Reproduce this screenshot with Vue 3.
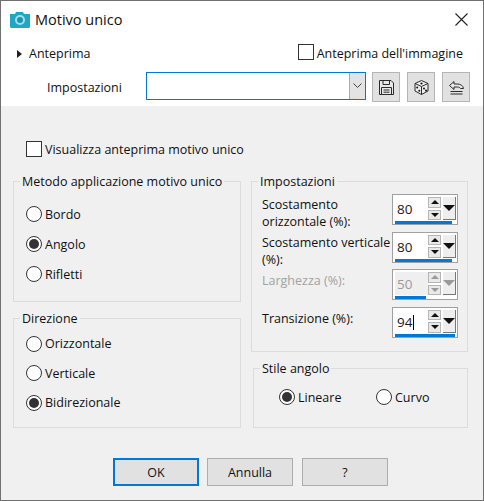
<script setup>
const methods = [
  { label: 'Bordo', on: false },
  { label: 'Angolo', on: true },
  { label: 'Rifletti', on: false }
]
const directions = [
  { label: 'Orizzontale', on: false },
  { label: 'Verticale', on: false },
  { label: 'Bidirezionale', on: true }
]
const offsets = [
  { label: 'Scostamento orizzontale (%):', value: '80', bar: 57 },
  { label: 'Scostamento verticale (%):', value: '80', bar: 57 },
  { label: 'Larghezza (%):', value: '50', bar: 31, off: true },
  { label: 'Transizione (%):', value: '94', bar: 60, caret: true }
]
</script>

<template>
  <div class="win">
    <header class="head">
      <div class="title-row">
        <svg class="cam" width="20" height="17" viewBox="0 0 20 17">
          <path d="M0 3h5l1-2h7l1 2h6v13l-1 1H1l-1-1z" fill="#1fa7c4" />
          <circle cx="10" cy="9" r="5" fill="#a5dfec" />
          <circle cx="10" cy="9" r="3" fill="#1c93b2" />
        </svg>
        <span class="title">Motivo unico</span>
        <svg class="close" width="13" height="13" viewBox="0 0 13 13">
          <path d="M.5 .5l12 12M12.500 .5l-12 12" stroke="#222" stroke-width="1.1" fill="none" />
        </svg>
      </div>
      <div class="preview-row">
        <span class="tri"></span>
        <span class="text">Anteprima</span>
        <span class="box image-box"></span>
        <span class="text">Anteprima dell'immagine</span>
      </div>
      <div class="preset-row">
        <span class="text preset-label">Impostazioni</span>
        <div class="combo">
          <span class="combo-arrow">
            <svg width="9" height="6" viewBox="0 0 9 6">
              <path d="M.5 .5l4 4 4-4" stroke="#444" fill="none" />
            </svg>
          </span>
        </div>
        <button class="tool">
          <svg width="15" height="15" viewBox="0 0 15 15" fill="none" stroke="#2b2b2b">
            <path d="M.5 .5h11.500l2.500 2.500v11.500H.5z" fill="#e8e8e8" />
            <path d="M4 .5v4h6.500v-4M2.500 14.500v-7h10v7M4.500 10h6M4.500 12.200h6" />
          </svg>
        </button>
        <button class="tool">
          <svg width="15" height="15" viewBox="0 0 15 15" stroke="#2b2b2b">
            <path d="M7.500 .5L14 3.500v7.500l-6.500 3.500L1 11V3.500z" fill="#eee" stroke-linejoin="round" />
            <path d="M1 3.500l6.500 3 6.500-3M7.500 6.500v8" fill="none" />
            <g fill="#111" stroke="none">
              <circle cx="7.500" cy="3.500" r="1.100" />
              <circle cx="3.200" cy="7.500" r="1" />
              <circle cx="5.300" cy="10.800" r="1" />
              <circle cx="10" cy="8.500" r="1" />
              <circle cx="12" cy="10.500" r="1" />
            </g>
          </svg>
        </button>
        <button class="tool">
          <svg width="15" height="15" viewBox="0 0 15 15" fill="none" stroke="#2b2b2b">
            <path d="M.5 5.500L5 1.500v2.500h3c3.500 0 6 1.500 6.500 4.500h-3c-.5-1-1.500-1.500-3-1.500H5v2.500z" fill="#e8e8e8" />
            <path d="M1.500 11.500h12M1.500 14h12" stroke-width="1.200" />
          </svg>
        </button>
      </div>
    </header>

    <main class="body">
      <label class="option show-row">
        <span class="box"></span>
        <span class="text">Visualizza anteprima motivo unico</span>
      </label>

      <div class="columns">
        <div class="col">
          <fieldset class="group method">
            <legend>Metodo applicazione motivo unico</legend>
            <div class="rows">
              <label v-for="m in methods" :key="m.label" class="option">
                <span :class="['radio', { on: m.on }]"></span>
                <span class="text">{{ m.label }}</span>
              </label>
            </div>
          </fieldset>
          <fieldset class="group direction">
            <legend>Direzione</legend>
            <div class="rows">
              <label v-for="d in directions" :key="d.label" class="option">
                <span :class="['radio', { on: d.on }]"></span>
                <span class="text">{{ d.label }}</span>
              </label>
            </div>
          </fieldset>
        </div>

        <div class="col">
          <fieldset class="group offsets">
            <legend>Impostazioni</legend>
            <div v-for="o in offsets" :key="o.label" :class="['offset', { off: o.off }]">
              <span class="offset-label">{{ o.label }}</span>
              <div class="spin">
                <div class="spin-top">
                  <span class="spin-value">{{ o.value }}<i v-if="o.caret" class="caret"></i></span>
                  <div class="steps">
                    <span class="step"><b class="up"></b></span>
                    <span class="step"><b class="down"></b></span>
                  </div>
                  <span class="drop"><b class="down big"></b></span>
                </div>
                <span class="bar" :style="{ width: o.bar + 'px' }"></span>
              </div>
            </div>
          </fieldset>
          <fieldset class="group corner">
            <legend>Stile angolo</legend>
            <div class="rows">
              <label class="option">
                <span class="radio on"></span>
                <span class="text">Lineare</span>
              </label>
              <label class="option">
                <span class="radio"></span>
                <span class="text">Curvo</span>
              </label>
            </div>
          </fieldset>
        </div>
      </div>

      <footer class="actions">
        <button class="btn primary">OK</button>
        <button class="btn">Annulla</button>
        <button class="btn">?</button>
      </footer>
    </main>
  </div>
</template>

<style>
html,
body {
  margin: 0;
  background: #f0f0f0;
}
</style>

<style scoped>
.win {
  box-sizing: border-box;
  width: 484px;
  height: 501px;
  display: flex;
  flex-direction: column;
  border: 1px solid #707070;
  background: #f0f0f0;
  color: #111;
  font-family: "Open Sans", "Noto Sans", sans-serif;
  font-size: 12.5px;
  line-height: 17px;
}

.head {
  height: 105px;
  flex: none;
  background: #fff;
}

.title-row {
  height: 36px;
  display: flex;
  align-items: center;
  padding: 0 15px 0 9px;
  box-sizing: border-box;
}

.cam {
  flex: none;
  margin-right: 5px;
}

.title {
  font-size: 14.500px;
  flex: 1;
}

.preview-row {
  height: 33px;
  display: flex;
  align-items: center;
  padding-left: 16px;
  box-sizing: border-box;
}

.tri {
  width: 0;
  height: 0;
  margin-right: 7px;
  border-left: 5px solid #222;
  border-top: 4.500px solid transparent;
  border-bottom: 4.500px solid transparent;
}

.image-box {
  margin-left: auto;
  margin-bottom: 3px;
}

.preview-row .text:last-child {
  margin-right: 20px;
}

.preset-row {
  display: flex;
  align-items: flex-start;
  padding: 2px 13px 0 46px;
}

.preset-label {
  width: 99px;
  line-height: 32px;
}

.combo {
  box-sizing: border-box;
  width: 220px;
  height: 28px;
  display: flex;
  justify-content: flex-end;
  border: 1px solid #0078d7;
}

.combo-arrow {
  width: 15px;
  display: flex;
  align-items: center;
  justify-content: center;
  background: #e3e3e3;
  border-left: 1px solid #a8a8a8;
}

.tool {
  box-sizing: border-box;
  width: 28px;
  height: 30px;
  padding: 0;
  margin-left: 7px;
  display: flex;
  align-items: center;
  justify-content: center;
  background: #e1e1e1;
  border: 1px solid #b5b5b5;
}

.tool:first-of-type {
  margin-left: 6px;
}

.body {
  flex: 1;
  padding: 35px 0 0 12px;
}

.text {
  white-space: nowrap;
}

.box {
  box-sizing: border-box;
  flex: none;
  width: 16px;
  height: 16px;
  margin-right: 3px;
  background: #fff;
  border: 1px solid #333;
}

.option {
  display: flex;
  align-items: center;
  height: 30px;
}

.show-row {
  height: 16px;
  padding-left: 13px;
}

.radio {
  box-sizing: border-box;
  flex: none;
  position: relative;
  width: 16px;
  height: 16px;
  margin-right: 3px;
  border: 1px solid #333;
  border-radius: 50%;
  background: #fff;
}

.radio.on::after {
  content: "";
  position: absolute;
  inset: 2px;
  border-radius: 50%;
  background: #333;
}

.columns {
  display: flex;
  margin-top: 16px;
}

.col {
  display: flex;
  flex-direction: column;
}

.col:first-child {
  width: 228px;
  margin-right: 10px;
}

.col:last-child {
  width: 217px;
}

.group {
  box-sizing: border-box;
  margin: 0;
  min-width: 0;
  padding: 0;
  border: 1px solid #dcdcdc;
}

.group legend {
  padding: 0 2px;
  margin-left: 6px;
  line-height: 17px;
  white-space: nowrap;
}

.method {
  height: 129px;
}

.method .rows {
  padding: 9px 0 0 12px;
}

.direction {
  height: 118px;
  margin-top: 8px;
}

.direction .rows {
  padding: 2px 0 0 12px;
}

.direction .option {
  height: 29.500px;
}

.offsets {
  height: 179px;
  padding: 4px 9px 0 10px;
}

.offsets legend {
  margin-left: -4px;
}

.offset {
  height: 37.500px;
  display: flex;
  justify-content: space-between;
}

.offset-label {
  width: 130px;
  padding-top: 2px;
}

.offset:last-child .offset-label {
  padding-top: 3px;
}

.offset.off .offset-label {
  padding-top: 3px;
  color: #a2a2a2;
}

.spin {
  box-sizing: border-box;
  width: 66px;
  height: 31px;
  display: flex;
  flex-direction: column;
  border: 1px solid #a0a0a0;
  background: #fff;
  padding: 2px 1px 1px 2px;
}

.spin-top {
  height: 23px;
  display: flex;
}

.spin-value {
  width: 33px;
  padding-left: 2px;
  font-size: 13.500px;
  line-height: 25px;
  color: #1a1a1a;
}

.off .spin-value {
  background: #efefef;
  color: #9a9a9a;
}

.caret {
  display: inline-block;
  width: 1px;
  height: 15px;
  margin-left: 1px;
  vertical-align: -3px;
  background: #000;
}

.steps {
  width: 13px;
  display: flex;
  flex-direction: column;
  gap: 2px;
}

.step {
  flex: 1;
  display: flex;
  align-items: center;
  justify-content: center;
  background: #e9e9e9;
  border: 1px solid #b5b5b5;
}

.drop {
  width: 13px;
  margin-left: 2px;
  display: flex;
  align-items: center;
  justify-content: center;
  background: #eee;
  border-right: 1px solid #777;
  border-bottom: 1px solid #777;
}

.up,
.down {
  width: 0;
  height: 0;
  border-left: 4px solid transparent;
  border-right: 4px solid transparent;
}

.up {
  border-bottom: 4px solid #111;
}

.down {
  border-top: 4px solid #111;
}

.big {
  border-left-width: 6px;
  border-right-width: 6px;
  border-top-width: 6px;
}

.off .up,
.off .down {
  border-top-color: #9a9a9a;
  border-bottom-color: #9a9a9a;
}

.bar {
  flex: none;
  height: 3px;
  margin-top: 1px;
  background: #0078d7;
}

.corner {
  height: 68px;
  margin: 8px 0 0 2px;
}

.corner .rows {
  display: flex;
  padding: 5px 0 0 25px;
}

.corner .option:first-child {
  width: 97px;
}

.actions {
  display: flex;
  gap: 8px;
  margin-top: 30px;
  padding-left: 100px;
}

.btn {
  box-sizing: border-box;
  width: 86px;
  height: 28px;
  padding: 0;
  background: #e1e1e1;
  border: 1px solid #adadad;
  color: #111;
  font: inherit;
}

.btn:last-child {
  margin-left: 1px;
}

.primary {
  border: 2px solid #0078d7;
}
</style>
